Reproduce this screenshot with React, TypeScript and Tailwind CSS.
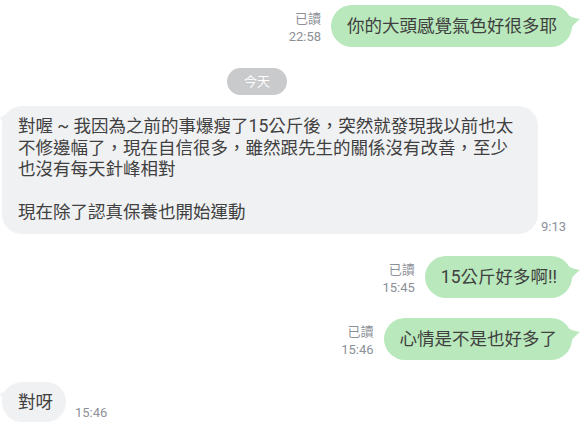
import React from "react";

const FONT = { fontFamily: 'Roboto, "Noto Sans CJK TC", "Noto Sans", sans-serif' };

function RightTail() {
  return (
    <svg className="absolute right-[-8px] top-[8px]" width="14" height="22" viewBox="0 0 14 22">
      <path d="M0 1 Q6 5 14 6 Q8 10 1 21 Z" fill="#b8e8bb" />
    </svg>
  );
}

function LeftTail() {
  return (
    <svg className="absolute left-[-3px] top-[6px]" width="10" height="18" viewBox="0 0 10 18">
      <path d="M10 0 Q4 5 0 6 Q5 10 10 18 Z" fill="#f0f1f3" />
    </svg>
  );
}

function Meta({ time, read = true }: { time: string; read?: boolean }) {
  return (
    <div className="flex flex-col items-end text-[13px] leading-[18px] text-[#8c9097] mr-[10px] mb-[1px]">
      {read && <span>已讀</span>}
      <span>{time}</span>
    </div>
  );
}

function RightMsg({ text, time }: { text: string; time: string }) {
  return (
    <div className="flex justify-end items-end pr-[13px]">
      <Meta time={time} />
      <div className="relative rounded-full bg-[#b8e8bb] pl-4 pr-[15px] py-[10px] text-[17.5px] leading-[22px] text-[#404040]">
        <RightTail />
        <span className="relative">{text}</span>
      </div>
    </div>
  );
}

export default function App() {
  return (
    <div className="w-[585px] h-[422px] bg-white overflow-hidden pt-[5px] flex flex-col" style={FONT}>
      <RightMsg text="你的大頭感覺氣色好很多耶" time="22:58" />

      <div className="mt-[21px] ml-[227px] w-[60px] h-[27px] rounded-full bg-[#c9cacc] flex items-center justify-center text-[13px] text-white">
        今天
      </div>

      <div className="mt-[11px] flex items-end pl-[2px]">
        <div className="relative w-[536px] rounded-[20px] bg-[#f0f1f3] pl-4 pr-3 pt-[10px] pb-[10px] text-[17.5px] leading-[21.5px] text-[#404040]">
          <LeftTail />
          <div className="relative">
            <div>對喔 ~ 我因為之前的事爆瘦了15公斤後，突然就發現我以前也太</div>
            <div>不修邊幅了，現在自信很多，雖然跟先生的關係沒有改善，至少</div>
            <div>也沒有每天針峰相對</div>
            <div>&nbsp;</div>
            <div>現在除了認真保養也開始運動</div>
          </div>
        </div>
        <span className="ml-[3px] mb-[-1px] text-[13px] leading-[16px] text-[#8c9097]">9:13</span>
      </div>

      <div className="mt-[22px]">
        <RightMsg text="15公斤好多啊!!" time="15:45" />
      </div>
      <div className="mt-[20px]">
        <RightMsg text="心情是不是也好多了" time="15:46" />
      </div>

      <div className="mt-[22px] flex items-end pl-[2px]">
        <div className="relative rounded-full bg-[#f0f1f3] pl-4 pr-[13px] py-[9px] text-[17.5px] leading-[22px] text-[#404040]">
          <LeftTail />
          <span className="relative">對呀</span>
        </div>
        <span className="ml-[9px] mb-[1px] text-[13px] leading-[16px] text-[#8c9097]">15:46</span>
      </div>
    </div>
  );
}
